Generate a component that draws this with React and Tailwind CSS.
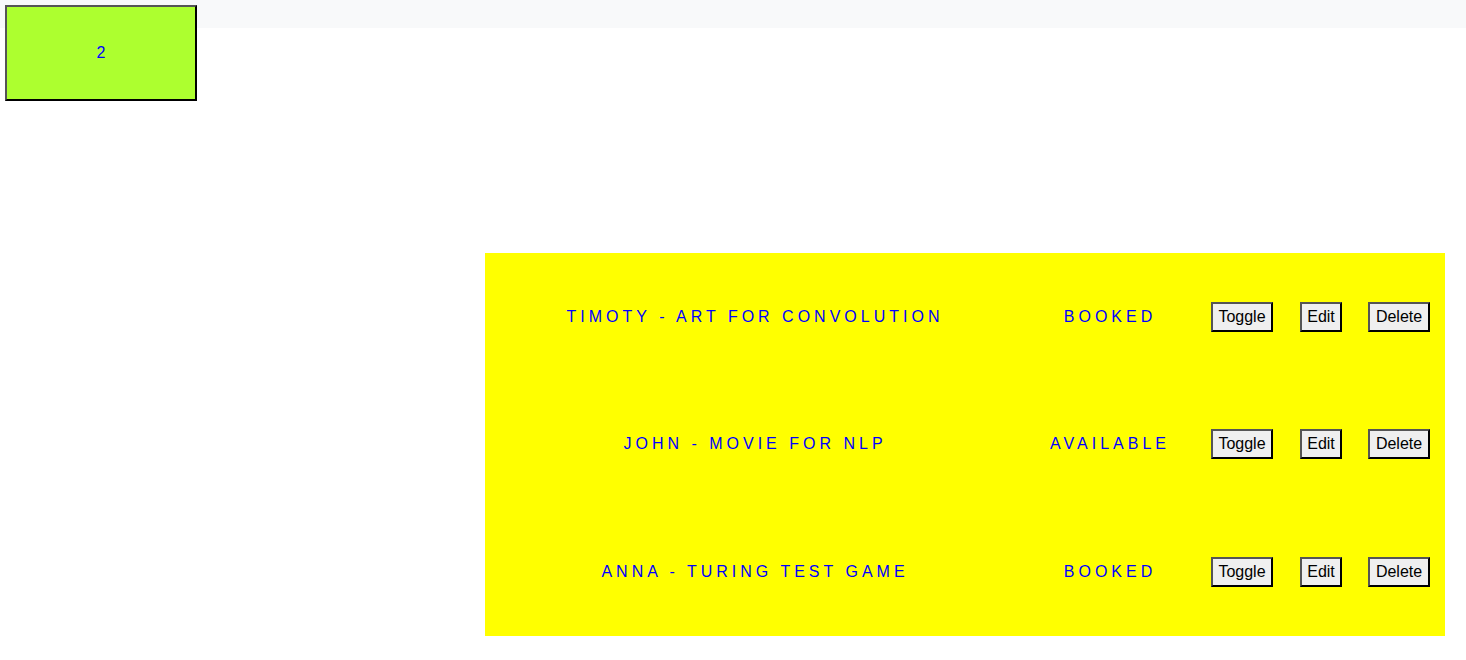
const rows = [
  { name: "Timoty - Art for Convolution", status: "Booked" },
  { name: "John - Movie for NLP", status: "Available" },
  { name: "Anna - Turing Test Game", status: "Booked" },
];

function Btn({ children, wide }) {
  return (
    <button
      className={
        "bg-[#efefef] text-black text-base leading-[18px] py-[4px] border-2 border-t-[#555] border-l-[#555] border-b-black border-r-black " +
        (wide ? "px-[6px]" : "px-[5px]")
      }
    >
      {children}
    </button>
  );
}

export default function App() {
  return (
    <div
      className="relative w-[1466px] h-[660px] bg-white"
      style={{ fontFamily: '"Liberation Sans", Arial, sans-serif' }}
    >
      <div className="h-[28px] bg-[#f8f9fa]"></div>

      <div className="absolute left-[5px] top-[5px] w-[192px] h-[96px] bg-[#adff2f] border-2 border-t-[#555] border-l-[#555] border-b-black border-r-black flex items-center justify-center text-[#0000ff] text-base">
        2
      </div>

      <div className="ml-[485px] mt-[225px] w-[960px] h-[383px] bg-[#ffff00] grid grid-rows-3">
        {rows.map((r) => (
          <div
            key={r.name}
            className="grid grid-cols-[540px_170px_94px_64px_92px] items-center"
          >
            <div className="text-center text-[#0000ff] uppercase tracking-[4px] text-base">
              {r.name}
            </div>
            <div className="text-center text-[#0000ff] uppercase tracking-[4px] text-base">
              {r.status}
            </div>
            <div className="flex justify-center">
              <Btn>Toggle</Btn>
            </div>
            <div className="flex justify-center">
              <Btn>Edit</Btn>
            </div>
            <div className="flex justify-center">
              <Btn wide>Delete</Btn>
            </div>
          </div>
        ))}
      </div>
    </div>
  );
}
